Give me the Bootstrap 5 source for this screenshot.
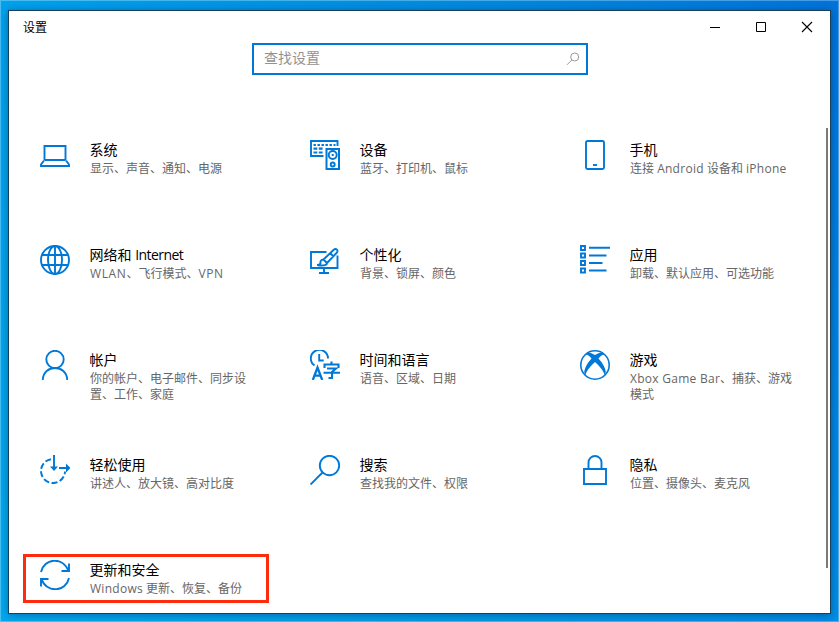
<!DOCTYPE html>
<html lang="zh-CN">
<head>
<meta charset="utf-8">
<meta name="viewport" content="width=device-width, initial-scale=1">
<title>设置</title>
<link href="https://cdn.jsdelivr.net/npm/bootstrap@5.3.0/dist/css/bootstrap.min.css" rel="stylesheet">
<style>
body{font-family:"Open Sans","Noto Sans CJK SC",sans-serif;font-size:12px;line-height:16px;color:#000}
.desktop{padding:10px 8px 8px;background:linear-gradient(to bottom,rgba(0,176,244,0),rgba(0,180,244,.4)),linear-gradient(to right,#00a2ec,#0088de 60%,#0074da);box-shadow:inset 0 0 0 1px rgba(255,255,255,.28)}
.window{border:1px solid #16405c;box-shadow:0 1px 8px rgba(0,20,60,.4);min-width:0}
.titlebar{height:32px;padding-left:14px;flex:none}
.titlebar>span{padding-top:2px}
.caption-btn{width:46px;height:32px;background:none;border:0;padding:0}
.search{width:336px;height:32px;flex:none;border:2px solid #0078d7;margin-left:243px;padding:0 6px 3px 10px}
.search input{font-size:14px;line-height:20px;color:#666;border:0;outline:0;width:290px;padding:0;height:23px}
.search input::placeholder{color:#929292;opacity:1}
.search svg{margin-top:2px}
.tiles{grid-template-columns:270px 270px 246px;grid-template-rows:repeat(4,105px) 49px;margin-top:59px;padding-left:14px}
.tile{width:246px;height:49px;padding:6px 0 0 17px;color:#000}
.tile svg{width:30px;height:30px;fill:none;stroke:#0078d7;stroke-width:1.9;flex:none}
.tile .solid{fill:#0078d7;stroke:none}
.tile-text{width:166px;margin-left:20px}
.tile-name{font-size:14px;line-height:20px;margin-left:-.5px}
.tile-info{color:#666;line-height:16px;margin-top:1px}
.tile-info .latin{letter-spacing:.27px}
.tile-info .caps{letter-spacing:.6px}
.tile-name .latin{letter-spacing:-.55px}
.selected{box-shadow:inset 0 0 0 3px #fc2c0c}
.thumb{right:2px;top:117px;width:2px;height:440px;background:#7a7a7a}
</style>
</head>
<body class="vh-100 overflow-hidden">
<div class="desktop vh-100 d-flex">
<main class="window bg-white flex-grow-1 position-relative d-flex flex-column">
<header class="titlebar d-flex align-items-center justify-content-between">
<span>设置</span>
<div class="d-flex">
<button class="caption-btn" aria-label="最小化"><svg class="d-block m-auto" width="12" height="12" stroke="#000" fill="none"><path d="M1 6.500h10"/></svg></button>
<button class="caption-btn" aria-label="最大化"><svg class="d-block m-auto" width="12" height="12" stroke="#000" fill="none"><path d="M1.500 1.500h9v9h-9z"/></svg></button>
<button class="caption-btn" aria-label="关闭"><svg class="d-block m-auto" width="12" height="12" stroke="#000" stroke-width="1.100" fill="none"><path d="M1 1l10 10M11 1L1 11"/></svg></button>
</div>
</header>
<form class="search d-flex align-items-center justify-content-between">
<input type="text" placeholder="查找设置" aria-label="查找设置">
<svg width="14" height="14" fill="none" stroke="#999"><circle cx="8.700" cy="5" r="4"/><path d="M5.900 7.900L1 12.800"/></svg>
</form>
<nav class="tiles d-grid">
<a class="tile d-flex text-decoration-none" href="#"><svg viewBox="0 0 30 30"><path d="M4.500 20V6h21v14M4.500 20h21M4 20.500L1 24.500V26h28v-1.500L26 20.500"/></svg><div class="tile-text"><div class="tile-name">系统</div><div class="tile-info">显示、声音、通知、电源</div></div></a>
<a class="tile d-flex text-decoration-none" href="#"><svg viewBox="0 0 30 30"><path d="M13.500 16H1V1h26.500v5"/><path stroke-width="2.200" stroke-dasharray="2.400 1.600" d="M3.500 5h22"/><path stroke-width="2.200" stroke-dasharray="3.800 1.500" d="M3.500 8.700h10.500M3.500 12.500h10.500"/><path stroke-width="2" d="M16.500 9h12.500v20H16.500z"/><circle cx="22.700" cy="15" r="4"/><circle cx="22.700" cy="24.500" r="2"/><path class="solid" d="M21.700 14h2v2h-2z"/></svg><div class="tile-text"><div class="tile-name">设备</div><div class="tile-info">蓝牙、打印机、鼠标</div></div></a>
<a class="tile d-flex text-decoration-none" href="#"><svg viewBox="0 0 30 30"><rect x="6" y="1" width="18" height="28" rx="1.500"/><path d="M13 25h4"/></svg><div class="tile-text"><div class="tile-name">手机</div><div class="tile-info">连接 <span class="latin">Android</span> 设备和 <span class="latin">iPhone</span></div></div></a>
<a class="tile d-flex text-decoration-none" href="#"><svg viewBox="0 0 30 30"><circle cx="15" cy="15" r="14"/><ellipse cx="15" cy="15" rx="7" ry="14"/><path d="M15 1v28M2 10h26M2 20h26"/></svg><div class="tile-text"><div class="tile-name">网络和 <span class="latin">Internet</span></div><div class="tile-info"><span class="caps">WLAN</span>、飞行模式、<span class="caps">VPN</span></div></div></a>
<a class="tile d-flex text-decoration-none" href="#"><svg viewBox="0 0 30 30"><path d="M16.500 7H1v16h26.500V10.500M14 23v4.500M9 28h10"/><path stroke-width="1.900" d="M13.500 14.500L23.500 5q2-1.800 3.400-.4t-.4 3.400L17 18M13.500 14.500l3.500 3.500M13.500 14.500q-3.700.5-3 4-1 1.500-3.500 1.500M8 20.300q9.500 1 9-2.800M20.500 8.500l3 3"/></svg><div class="tile-text"><div class="tile-name">个性化</div><div class="tile-info">背景、锁屏、颜色</div></div></a>
<a class="tile d-flex text-decoration-none" href="#"><svg viewBox="0 0 30 30"><path d="M1 1h4v4H1zM1 8.500h4v4H1zM1 16h4v4H1zM1 23.500h4v4H1zM9 2.800h21M9 10.500h17.500M9 18h13.500M9 25.500h17.500"/></svg><div class="tile-text"><div class="tile-name">应用</div><div class="tile-info">卸载、默认应用、可选功能</div></div></a>
<a class="tile d-flex text-decoration-none" href="#"><svg viewBox="0 0 30 30"><circle cx="15" cy="9.500" r="8.700"/><path d="M2.800 30C3 14 27 14 27.200 30"/></svg><div class="tile-text"><div class="tile-name">帐户</div><div class="tile-info">你的帐户、电子邮件、同步设置、工作、家庭</div></div></a>
<a class="tile d-flex text-decoration-none" href="#"><svg viewBox="0 0 30 30"><path d="M4.500 15.500A8.600 8.600 0 1 1 18 8.500M9.200 4v6.500h4.500"/><path stroke-width="2.300" d="M2.800 30L7.500 17.500 12.200 30M4.200 25.700h6.600"/><path stroke-width="2.100" d="M21.500 11.500v3M14.500 18v-3.500h14V18M17 18.500h9l-4 3.500v6h-3.500M13.500 22.800H30"/></svg><div class="tile-text"><div class="tile-name">时间和语言</div><div class="tile-info">语音、区域、日期</div></div></a>
<a class="tile d-flex text-decoration-none" href="#"><svg viewBox="0 0 30 30"><circle cx="15" cy="15" r="14.200" stroke-width="1.600"/><path class="solid" d="M5 4.500L8 2.500Q11.500 2.500 15 5 18.500 2.500 22 2.500l3 2q-3-.5-6.500 4Q24.500 15 25.800 21.500L25 25.500Q22.500 18.500 15 12 7.500 18.500 5 25.500L4.200 21.500Q5.500 15 11.500 8.500 8 4 5 4.500z"/></svg><div class="tile-text"><div class="tile-name">游戏</div><div class="tile-info"><span class="latin">Xbox Game Bar</span>、捕获、游戏模式</div></div></a>
<a class="tile d-flex text-decoration-none" href="#"><svg viewBox="0 0 30 30"><path stroke-dasharray="6 2.500" d="M11 4.200A12 12 0 1 0 25 16.500"/><path d="M14 0V13M19 13h9"/><path class="solid" d="M10 11.500h8l-4 4.500zM26 8.500l4.500 4.500-4.500 4.500z"/></svg><div class="tile-text"><div class="tile-name">轻松使用</div><div class="tile-info">讲述人、放大镜、高对比度</div></div></a>
<a class="tile d-flex text-decoration-none" href="#"><svg viewBox="0 0 30 30"><circle cx="19.500" cy="10.500" r="9.700"/><path d="M12.500 17.500L.5 29.500"/></svg><div class="tile-text"><div class="tile-name">搜索</div><div class="tile-info">查找我的文件、权限</div></div></a>
<a class="tile d-flex text-decoration-none" href="#"><svg viewBox="0 0 30 30"><path d="M4 14h22v15H4zM8.500 14V7.500a6.500 6.500 0 0 1 13 0V14"/></svg><div class="tile-text"><div class="tile-name">隐私</div><div class="tile-info">位置、摄像头、麦克风</div></div></a>
<a class="tile selected d-flex text-decoration-none" href="#"><svg viewBox="0 0 30 30"><path d="M1 12C4-1.500 22-4 28.500 10.500M29 3.500V11h-7.500M29 18C26 31.500 8 34 1.500 19.500M1 26.500V19h7.500"/></svg><div class="tile-text"><div class="tile-name">更新和安全</div><div class="tile-info"><span class="latin">Windows</span> 更新、恢复、备份</div></div></a>
</nav>
<div class="thumb position-absolute"></div>
</main>
</div>
<script src="https://cdn.jsdelivr.net/npm/bootstrap@5.3.0/dist/js/bootstrap.bundle.min.js"></script>
</body>
</html>
